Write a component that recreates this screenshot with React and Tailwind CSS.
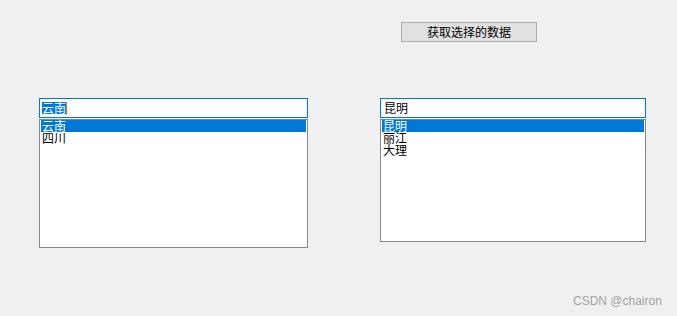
const cjk = "font-['Noto_Sans_CJK_SC','Noto_Sans_CJK_JP',sans-serif]";

const ListBox = ({ items, width, height }) => (
  <div className={`bg-white border border-[#828790] px-[1px] pt-0 ${width} ${height}`}>
    {items.map((item, i) => (
      <div
        key={item}
        className={`h-[12px] leading-[12px] text-[12px] pl-[1px] ${i === 0 ? 'bg-[#0078d7] text-white' : 'text-black'}`}
      >
        {item}
      </div>
    ))}
  </div>
);

const ComboPanel = ({ value, items, width, listHeight, selected }) => (
  <div className={`flex flex-col ${width}`}>
    <div className="h-[20px] bg-white border border-[#0078d7] flex items-center pl-[2px]">
      {selected ? (
        <span className="flex items-center">
          <span className="bg-[#0078d7] text-white text-[12px] leading-[12px] h-[12px]">{value}</span>
          <span className="w-[1px] h-[13px] bg-[#e07a1f]" />
        </span>
      ) : (
        <span className="text-black text-[12px] leading-[12px] pl-[1px]">{value}</span>
      )}
    </div>
    <div className="mt-[1px]">
      <ListBox items={items} width="w-full" height={listHeight} />
    </div>
  </div>
);

export default function App() {
  return (
    <div className={`relative w-[677px] h-[316px] bg-[#f0f0f0] overflow-hidden ${cjk}`}>
      <div className="pt-[22px] pl-[401px]">
        <button className="w-[136px] h-[20px] border border-[#adadad] bg-[#e1e1e1] text-[12px] leading-[12px] text-black flex items-center justify-center">
          获取选择的数据
        </button>
      </div>

      <div className="flex items-start mt-[56px] pl-[39px] gap-[72px]">
        <ComboPanel value="云南" items={['云南', '四川']} width="w-[269px]" listHeight="h-[129px]" selected />
        <ComboPanel value="昆明" items={['昆明', '丽江', '大理']} width="w-[266px]" listHeight="h-[123px]" />
      </div>

      <div className="absolute left-[573px] top-[294px] text-[12px] leading-[14px] text-[#a3a3a3] font-['Liberation_Sans',sans-serif]">
        CSDN @chairon
      </div>
    </div>
  );
}
